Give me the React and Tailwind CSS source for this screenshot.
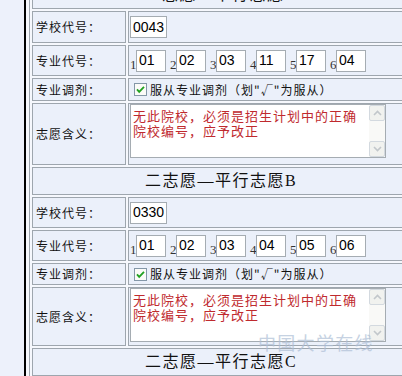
import React from 'react';

// shared cell look: thin gray border on pale blue
const cell = 'border border-[#9ea6ae] bg-[#ebf0fa]';

function Box({ value, w = 'w-[30px]' }) {
  return (
    <div className={`${w} h-[22px] shrink-0 border border-[#a5acb2] bg-white pl-[2px] flex items-center text-[14px] font-['Liberation_Sans',sans-serif] text-black`}>
      {value}
    </div>
  );
}

function Row({ h, label, top, children }) {
  return (
    <div className={`flex gap-[2px] shrink-0 ${h}`}>
      <div className={`${cell} w-[94px] shrink-0 flex items-center pl-[3px] text-[12px] tracking-[1px] leading-none text-[#111]`}>
        {label}
      </div>
      <div className={`${cell} flex-1 flex ${top ? 'items-start' : 'items-center'} pl-[1px]`}>{children}</div>
    </div>
  );
}

function Header({ children }) {
  return (
    <div className={`${cell} h-[28px] shrink-0 flex items-center justify-center text-[16px] tracking-[1.5px] font-['Liberation_Serif','Noto_Sans_CJK_SC',serif] text-[#111]`}>
      {children}
    </div>
  );
}

function Majors({ codes }) {
  return (
    <div className="flex items-end gap-[4px]">
      {codes.map((c, i) => (
        <div key={i} className="flex items-end">
          <span className="w-[6px] pb-[1px] text-[13px] leading-[13px] font-['Liberation_Serif',serif] text-[#333]">{i + 1}</span>
          <Box value={c} />
        </div>
      ))}
    </div>
  );
}

function Adjust() {
  return (
    <div className="flex items-center ml-[4px]">
      <svg width="13" height="13" viewBox="0 0 13 13" className="shrink-0">
        <rect x="0.5" y="0.5" width="12" height="12" fill="#fbfbf8" stroke="#8497a8" />
        <path d="M3 6.3 L5.2 8.8 L10 3.8" fill="none" stroke="#21a121" strokeWidth="1.8" />
      </svg>
      <span className="ml-[3px] text-[12px] tracking-[1px] leading-none text-[#111]">服从专业调剂（划"√"为服从）</span>
    </div>
  );
}

function ScrollBtn({ up }) {
  return (
    <div className="w-[16px] h-[16px] rounded-[2px] border border-[#d3d9df] bg-[#f1f2ef] flex items-center justify-center">
      <svg width="9" height="6" viewBox="0 0 9 6">
        <path d={up ? 'M1 5 L4.5 1.5 L8 5' : 'M1 1 L4.5 4.5 L8 1'} fill="none" stroke="#c2c7cb" strokeWidth="1.6" />
      </svg>
    </div>
  );
}

function Meaning() {
  return (
    <div className="relative w-[256px] h-[54px] border border-[#a5acb2] bg-white">
      <div className="pl-[2px] pt-[3px] text-[13px] leading-[15px] tracking-[1px] text-[#bf2a2e]">
        无此院校，必须是招生计划中的正确
        <br />
        院校编号，应予改正
      </div>
      <div className="absolute right-0 top-0 bottom-0 w-[16px] bg-[#f9f9f7] flex flex-col justify-between">
        <ScrollBtn up />
        <ScrollBtn />
      </div>
    </div>
  );
}

function Choice({ school, codes, tall }) {
  return (
    <>
      <Row h={tall ? 'h-[32px]' : 'h-[31px]'} label="学校代号：">
        <Box value={school} w="w-[37px]" />
      </Row>
      <Row h="h-[31px]" label="专业代号：">
        <Majors codes={codes} />
      </Row>
      <Row h={tall ? 'h-[23px]' : 'h-[22px]'} label="专业调剂：">
        <Adjust />
      </Row>
      <Row h={tall ? 'h-[62px]' : 'h-[59px]'} label="志愿含义：" top>
        <Meaning />
      </Row>
    </>
  );
}

export default function App() {
  return (
    <div className="relative w-[402px] h-[376px] overflow-hidden bg-[#edf1fb] font-['Noto_Sans_CJK_SC',sans-serif]">
      <div className="flex h-full">
        <div className="w-[24px] shrink-0" />
        <div className="w-[2px] shrink-0 bg-black" />
        <div className="w-[3px] shrink-0 bg-[#f6f8fd]" />
        <div className="w-[383px] shrink-0 h-full border-l border-[#9ea6ae] bg-[#f6f8fd] pl-[2px] pr-[2px]">
          <div className="flex flex-col gap-[2px] -mt-[19px]">
            <Header>二志愿—平行志愿A</Header>
            <Choice school="0043" codes={['01', '02', '03', '11', '17', '04']} tall />
            <Header>二志愿—平行志愿B</Header>
            <Choice school="0330" codes={['01', '02', '03', '04', '05', '06']} />
            <Header>二志愿—平行志愿C</Header>
          </div>
        </div>
      </div>

      {/* site watermark over the lower right */}
      <div className="absolute left-[258px] top-[333px] text-[18px] leading-[18px] tracking-[1.3px] text-[#aebfd6] opacity-70">
        中国大学在线
      </div>
    </div>
  );
}
